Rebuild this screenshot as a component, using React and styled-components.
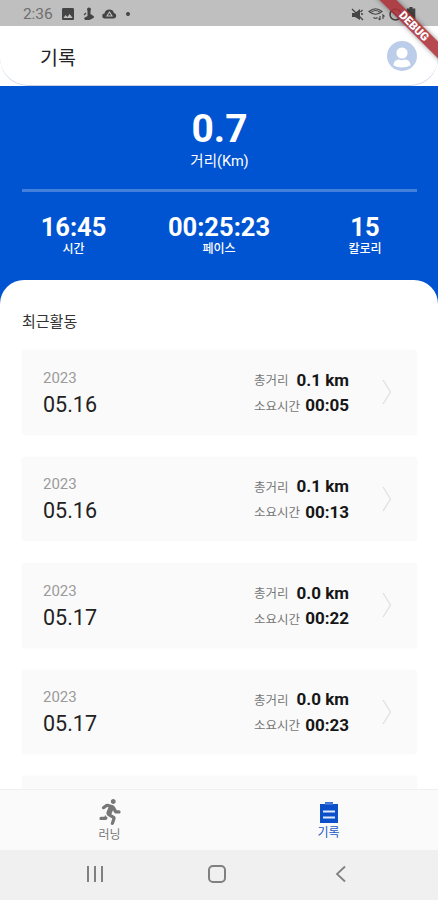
import styled, { createGlobalStyle } from "styled-components";
import { MdImage } from "react-icons/md";
import { FaRunning } from "react-icons/fa";

const GlobalStyle = createGlobalStyle`
  * {
    box-sizing: border-box;
  }
  body {
    margin: 0;
    font-family: Roboto, "Noto Sans CJK KR", sans-serif;
    background: #ffffff;
  }
`

const Screen = styled.div`
  position: relative;
  display: flex;
  flex-direction: column;
  width: 438px;
  height: 900px;
  overflow: hidden;
  background: #ffffff;
`

const StatusBar = styled.div`
  display: flex;
  align-items: center;
  justify-content: space-between;
  flex: none;
  height: 26px;
  padding: 2px 22px 0 23px;
  background: #bfbfbf;
`

const StatusGroup = styled.div`
  display: flex;
  align-items: center;
  gap: ${props => props.$gap}px;
  color: #444444;
  svg {
    display: block;
  }
`

const Clock = styled.span`
  width: 30px;
  font-size: 15.5px;
  letter-spacing: -0.1px;
  color: #6e6e6e;
`

const Dot = styled.span`
  width: 4px;
  height: 4px;
  margin-left: 2px;
  border-radius: 50%;
  background: #444444;
`

const DebugBanner = styled.div`
  position: absolute;
  top: 20px;
  right: -33px;
  width: 114px;
  height: 12px;
  transform: rotate(45deg);
  background: rgba(172, 48, 56, 0.88);
  box-shadow: 0 0 5px rgba(0, 0, 0, 0.4);
  color: #ffffff;
  font-size: 11.5px;
  font-weight: 900;
  line-height: 12.5px;
  text-align: center;
`

const Header = styled.header`
  display: flex;
  align-items: center;
  justify-content: space-between;
  flex: none;
  height: 60px;
  padding: 0 21px 0 40px;
  border-bottom: 1px solid #c9d2e4;
  background: #ffffff;
  border-radius: 0 0 28px 28px;
`

const Title = styled.h1`
  margin: 0;
  padding-top: 1px;
  font-size: 19.5px;
  font-weight: 400;
  color: #222222;
`

const Summary = styled.section`
  flex: none;
  height: 218px;
  padding: 22px 21px 0 22px;
  background: #0054d1;
  color: #ffffff;
  text-align: center;
`

const Distance = styled.div`
  font-size: 39px;
  font-weight: 700;
  line-height: 42px;
`

const DistanceLabel = styled.div`
  height: 39px;
  padding-top: 1.5px;
  font-size: 14.5px;
  line-height: 20px;
`

const Divider = styled.div`
  height: 3px;
  background: #4380dc;
`

const Stats = styled.div`
  display: grid;
  grid-template-columns: 103px 1fr 104px;
  padding-top: 22px;
`

const StatValue = styled.div`
  font-size: 25.5px;
  font-weight: 700;
  line-height: 26px;
`

const StatLabel = styled.div`
  font-size: 12px;
  font-weight: 500;
  line-height: 19px;
`

const Panel = styled.section`
  flex: 1;
  min-height: 0;
  margin-top: -24px;
  padding: 31px 21px 0 22px;
  border-radius: 24px 24px 0 0;
  background: #ffffff;
  overflow: hidden;
`

const PanelTitle = styled.h2`
  height: 39px;
  margin: 0;
  font-size: 15px;
  font-weight: 400;
  line-height: 22px;
  color: #333333;
`

const List = styled.div`
  display: flex;
  flex-direction: column;
  gap: 22px;
`

const Card = styled.div`
  display: flex;
  align-items: center;
  flex: none;
  height: 84.5px;
  padding: 0 25px 0 21px;
  border-radius: 3px;
  background: #fafafa;
  box-shadow: 0 0 3px #fafafa;
  svg {
    margin-left: 33px;
  }
`

const DateBox = styled.div`
  flex: 1;
  padding-top: 2px;
`

const Year = styled.div`
  font-size: 15px;
  line-height: 22px;
  color: #9b9b9b;
`

const Day = styled.div`
  font-size: 21.5px;
  line-height: 31px;
  color: #222222;
`

const Metrics = styled.div`
  display: flex;
  flex-direction: column;
  width: 95px;
`

const Metric = styled.div`
  display: flex;
  align-items: center;
  justify-content: space-between;
  height: 25.5px;
  white-space: nowrap;
`

const MetricName = styled.span`
  font-size: 12.5px;
  color: #777777;
`

const MetricValue = styled.span`
  font-size: 17px;
  font-weight: 700;
  color: #161616;
`

const TabBar = styled.nav`
  display: grid;
  grid-template-columns: 1fr 1fr;
  flex: none;
  height: 61px;
  border-top: 1px solid #f0f0f0;
  background: #fafafa;
`

const Tab = styled.div`
  display: flex;
  flex-direction: column;
  align-items: center;
  padding-top: ${props => (props.$active ? "11px" : "9px")};
  font-size: 12px;
  color: ${props => (props.$active ? "#1559c7" : "#777777")};
  svg {
    display: block;
    flex: none;
  }
`

const TabLabel = styled.span`
  margin-top: 1px;
  line-height: 18px;
`

const SystemNav = styled.div`
  display: flex;
  align-items: center;
  justify-content: space-between;
  flex: none;
  height: 50px;
  padding: 0 92px 2px 86px;
  background: #f0f0f0;
`

const HomeButton = styled.div`
  width: 18px;
  height: 18px;
  margin-right: 5px;
  border: 2px solid #808080;
  border-radius: 5px;
`

const activities = [
  { day: "05.16", distance: "0.1 km", time: "00:05" },
  { day: "05.16", distance: "0.1 km", time: "00:13" },
  { day: "05.17", distance: "0.0 km", time: "00:22" },
  { day: "05.17", distance: "0.0 km", time: "00:23" },
]

const stats = [
  { value: "16:45", label: "시간" },
  { value: "00:25:23", label: "페이스" },
  { value: "15", label: "칼로리" },
]

function PersonIcon() {
  return (
    <svg width="12" height="14" viewBox="0 0 12 14" fill="currentColor">
      <circle cx="6" cy="2.5" r="2" />
      <path d="M4.5 4h3v3l3 2v2l-4 2H2l-1-2 3.5-2z" />
      <path d="M3 6l-2 2M7 9l4 1" stroke="currentColor" strokeWidth="1.2" />
    </svg>
  )
}

function CloudIcon() {
  return (
    <svg width="15" height="12" viewBox="0 0 15 12">
      <path d="M3 10.5a2.5 2.5 0 0 1-.5-5C3 .5 11 .2 12 5a2.8 2.8 0 0 1 0 5.5z" fill="currentColor" />
      <path d="M7.5 4l2.5 4H5z" fill="none" stroke="#bfbfbf" strokeWidth="1.1" />
    </svg>
  )
}

function MuteIcon() {
  return (
    <svg width="13" height="13" viewBox="0 0 13 13">
      <path d="M1 5h3l5-4v11L4 9H1z" fill="currentColor" />
      <path d="M1 1l11 11M9.5 4l2-2M10 6h2" stroke="currentColor" strokeWidth="1.3" />
    </svg>
  )
}

function WifiIcon() {
  return (
    <svg width="17" height="14" viewBox="0 0 17 14" fill="none" stroke="currentColor" strokeWidth="1.1">
      <path d="M1 4.5Q7.5-1 14 4.5Q7.5 10 1 4.5z" />
      <path d="M3.5 5Q7.5 2 11.5 5M5.5 10.5q2 1.5 4 0M12 9v4M10.5 11.5L12 13M15 12V8l1.5 1.5" />
    </svg>
  )
}

function BatteryIcon() {
  return (
    <svg width="10" height="14" viewBox="0 0 9 13" fill="currentColor">
      <path d="M3 0h3v1.5h2.5V13h-8V1.5H3z" />
    </svg>
  )
}

function BlockIcon() {
  return (
    <svg width="13" height="13" viewBox="0 0 13 13" fill="none" stroke="currentColor" strokeWidth="1.5">
      <circle cx="6.5" cy="6.5" r="5.5" />
      <path d="M2.5 2.5l8 8" />
    </svg>
  )
}

function Avatar() {
  return (
    <svg width="30" height="30" viewBox="0 0 30 30">
      <circle cx="15" cy="15" r="15" fill="#bccde9" />
      <circle cx="15" cy="12" r="5.6" fill="#ffffff" />
      <path d="M6.5 24.5c0-4 3-6 5.5-6q3 1.5 6 0c2.5 0 5.5 2 5.5 6q-8.5 4-17 0z" fill="#ffffff" />
    </svg>
  )
}

function ArrowIcon() {
  return (
    <svg width="10" height="26" viewBox="0 0 10 26" fill="none" stroke="#e0e0e0" strokeWidth="1.3">
      <path d="M1 1l7.5 12L1 25" />
    </svg>
  )
}

function ClipboardIcon() {
  return (
    <svg width="18" height="22" viewBox="0 0 18 22">
      <path d="M0 3h5V1h8v2h5v19H0z" fill="#0b50c8" />
      <path d="M5 2.5h8" stroke="#4a7ed8" strokeWidth="2.5" />
      <path d="M3 10.5h12M3 16.5h12" stroke="#dfe9fa" strokeWidth="2" />
    </svg>
  )
}

function ActivityCard({ day, distance, time }) {
  return (
    <Card>
      <DateBox>
        <Year>2023</Year>
        <Day>{day}</Day>
      </DateBox>
      <Metrics>
        <Metric>
          <MetricName>총거리</MetricName>
          <MetricValue>{distance}</MetricValue>
        </Metric>
        <Metric>
          <MetricName>소요시간</MetricName>
          <MetricValue>{time}</MetricValue>
        </Metric>
      </Metrics>
      <ArrowIcon />
    </Card>
  )
}

export default function App() {
  return (
    <Screen>
      <GlobalStyle />
      <StatusBar>
        <StatusGroup $gap={7}>
          <Clock>2:36</Clock>
          <MdImage size={16} />
          <PersonIcon />
          <CloudIcon />
          <Dot />
        </StatusGroup>
        <StatusGroup $gap={4}>
          <MuteIcon />
          <WifiIcon />
          <BlockIcon />
          <BatteryIcon />
        </StatusGroup>
      </StatusBar>
      <Header>
        <Title>기록</Title>
        <Avatar />
      </Header>
      <Summary>
        <Distance>0.7</Distance>
        <DistanceLabel>거리(Km)</DistanceLabel>
        <Divider />
        <Stats>
          {stats.map(stat => (
            <div key={stat.label}>
              <StatValue>{stat.value}</StatValue>
              <StatLabel>{stat.label}</StatLabel>
            </div>
          ))}
        </Stats>
      </Summary>
      <Panel>
        <PanelTitle>최근활동</PanelTitle>
        <List>
          {activities.map(activity => (
            <ActivityCard key={activity.time} {...activity} />
          ))}
          {/* top edge of the next card, peeking above the tab bar */}
          <Card />
        </List>
      </Panel>
      <TabBar>
        <Tab>
          <FaRunning size={26} />
          <TabLabel>러닝</TabLabel>
        </Tab>
        <Tab $active>
          <ClipboardIcon />
          <TabLabel>기록</TabLabel>
        </Tab>
      </TabBar>
      <SystemNav>
        <svg width="18" height="18" viewBox="0 0 18 18" stroke="#808080" strokeWidth="2">
          <path d="M2 1v16M9 1v16M16 1v16" />
        </svg>
        <HomeButton />
        <svg width="11" height="18" viewBox="0 0 11 18" fill="none" stroke="#808080" strokeWidth="1.8">
          <path d="M10 1.5L2 9l8 7.5" />
        </svg>
      </SystemNav>
      <DebugBanner>DEBUG</DebugBanner>
    </Screen>
  )
}
